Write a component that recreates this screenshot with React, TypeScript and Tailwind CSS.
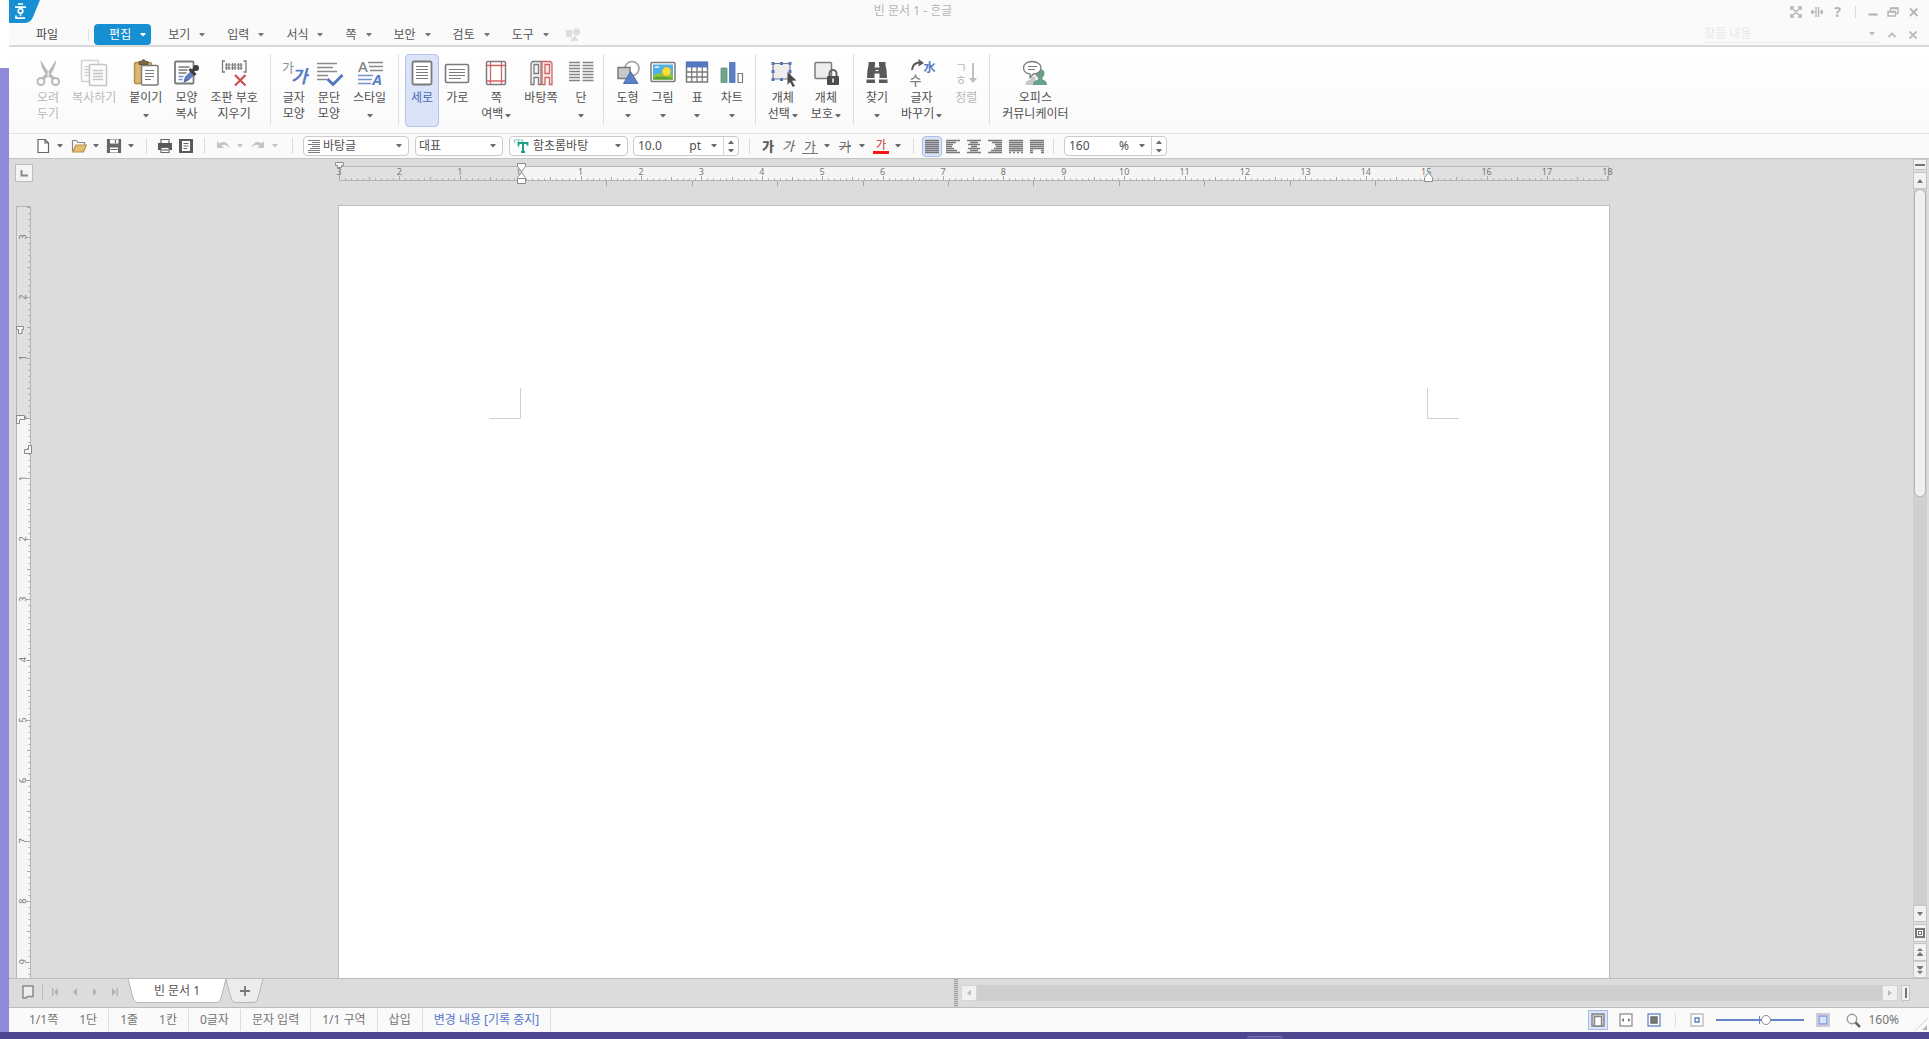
import type { ReactNode } from 'react';
import clsx from 'clsx';

const UNIT = 60.4;

const menus = ['보기', '입력', '서식', '쪽', '보안', '검토', '도구'];

function Caret({ className }: { className?: string }) {
  return (
    <svg viewBox="0 0 6 4" className={clsx('h-1 w-1.5 shrink-0', className)} fill="currentColor" aria-hidden="true">
      <path d="M.5 0h5v1L3 3.500.5 1z" />
    </svg>
  );
}

function Icon({ children }: { children: ReactNode }) {
  return (
    <svg viewBox="0 0 28 28" className="h-7 w-7 shrink-0 overflow-visible" fill="none" stroke="#7b7b7b" strokeWidth="1.5" aria-hidden="true">
      {children}
    </svg>
  );
}

// Ribbon icons

const CutIcon = () => (
  <Icon>
    <g stroke="#b9b9b9" strokeWidth="2">
      <circle cx="7" cy="22.5" r="3.5" />
      <circle cx="21.5" cy="22.5" r="3.5" />
      <path d="M19.5 19.5 14.2 15" strokeWidth="3" />
      <path d="M9 19.5 14.2 15" strokeWidth="3" />
    </g>
    <path d="M6.5 1 17 17l-3 1.5C9 12 6.500 6 6.500 1z M22 1 11.500 17l3 1.500C19.500 12 22 6 22 1z" fill="#b9b9b9" stroke="none" />
    <circle cx="14.300" cy="15.500" r="1" fill="#fff" stroke="none" />
  </Icon>
);

const CopyIcon = () => (
  <Icon>
    <g stroke="#c4c4c4">
      <rect x="1.500" y="1.500" width="17" height="21" rx="1" fill="#fcfcfc" stroke="#d2d2d2" />
      <path d="M4.500 7.500h6M4.500 10.500h6M4.500 13.500h6M4.500 16.500h6" stroke="#d2d2d2" />
      <rect x="9.500" y="5.500" width="17" height="21" rx="1" fill="#fcfcfc" />
      <path d="M13 11.500h10M13 14.500h10M13 17.500h10M13 20.500h10" />
    </g>
  </Icon>
);

const PasteIcon = () => (
  <Icon>
    <rect x="2.500" y="3.500" width="17" height="21" rx="1.500" fill="#dcb76f" stroke="#b28f4c" />
    <path d="M7 5.500v-3h2.500c.5-2.500 3.500-2.500 4 0H16v3z" fill="#7d6845" stroke="#66563c" strokeWidth="1" />
    <rect x="9.500" y="6.500" width="16.500" height="19.500" rx="1" fill="#fff" />
    <path d="M13 11.500h9M13 14.500h9M13 17.500h9M13 20.500h6" strokeWidth="1.200" />
  </Icon>
);

const PickStyleIcon = () => (
  <Icon>
    <rect x="3" y="2.500" width="18.500" height="22" rx="1" fill="#fff" strokeWidth="1.800" />
    <path d="M6.500 8h11M6.500 11h9M6.500 14h8" />
    <path d="M6.500 17.500h5M6.500 20.500h4" stroke="#7592ce" />
    <path d="m12 23 1.500-5 6-6 3 3-6 6z" fill="#5c7ec4" stroke="#4a5f96" strokeWidth="1" />
    <path d="m17.500 10 6 6M20 12.500l3.500-3.500" stroke="#3d3d3d" strokeWidth="3" />
    <circle cx="24" cy="9" r="3" fill="#3d3d3d" stroke="none" />
  </Icon>
);

const ClearMarkIcon = () => (
  <Icon>
    <path d="M5 2H2.500v11H5M23.500 2H26v11h-2.500" strokeWidth="1.300" />
    <path d="M6.500 4v7M9 4v7M12.500 4v7M15 4v7M18.500 4v7M21 4v7M5 6h5.500M5 9h5.500M11 6h5.500M11 9h5.500M17 6h5.500M17 9h5.500" strokeWidth="1.200" />
    <path d="m15 16 10.500 10.500M25.500 16 15 26.500" stroke="#cf4d4d" strokeWidth="2.200" />
  </Icon>
);

const CharShapeIcon = () => (
  <Icon>
    <text x="2" y="13" fontSize="13" fill="#909090" stroke="none">가</text>
    <text x="11" y="24" fontSize="18" fontStyle="italic" fontWeight="700" fill="#5c7ec4" stroke="none">가</text>
  </Icon>
);

const ParaShapeIcon = () => (
  <Icon>
    <path d="M2 4.500h20M2 8.500h16M2 12.500h20M2 16.500h11M2 20.500h10" strokeWidth="1.600" stroke="#8a8a8a" />
    <path d="m12.500 20 5.500 5.500L27.500 16" stroke="#5477c2" strokeWidth="3" />
  </Icon>
);

const StyleIcon = () => (
  <Icon>
    <text x="2" y="13" fontSize="15" fontWeight="500" fill="#808080" stroke="none">A</text>
    <path d="M12 3.500h15M13 7.500h14M14 11.500h13" stroke="#8a8a8a" />
    <path d="M2 16.500h15M2 20.500h14M2 24.500h13" stroke="#7592ce" />
    <text x="16.500" y="26" fontSize="15" fontStyle="italic" fontWeight="700" fill="#5c7ec4" stroke="none">A</text>
  </Icon>
);

const PortraitIcon = () => (
  <Icon>
    <rect x="4.500" y="2.500" width="19" height="23" rx="1.500" fill="#fff" strokeWidth="1.800" />
    <path d="M8 7.500h12M8 10.500h12M8 13.500h12M8 16.500h12M8 19.500h12" strokeWidth="1.200" />
  </Icon>
);

const LandscapeIcon = () => (
  <Icon>
    <rect x="2.500" y="5.500" width="23" height="18" rx="1.500" fill="#fff" strokeWidth="1.600" />
    <path d="M6 10.500h16M6 13.500h16M6 16.500h16M6 19.500h12" strokeWidth="1.200" />
  </Icon>
);

const MarginIcon = () => (
  <Icon>
    <rect x="4.500" y="2.500" width="19" height="23" rx="1.500" fill="#fff" />
    <path d="M8.500 3v22M19.500 3v22M5 6.500h18M5 22h18" stroke="#d06464" strokeWidth="1.300" />
  </Icon>
);

const MasterPageIcon = () => (
  <Icon>
    <path d="M4 25.500v-21l1.500-2H14v23h-2.500v-7H7v7zM7 5.500h4.500v9H7z" fill="#f4f4f4" strokeWidth="1.300" />
    <path d="M15 25.500v-23h8.500l1.500 2v21h-2.500v-7H18v7zM18 5.500h4.500v9H18z" fill="#fbeaea" stroke="#d06464" strokeWidth="1.300" />
  </Icon>
);

const ColumnsIcon = () => (
  <Icon>
    <path
      d="M2 3.500h11M2 6.500h11M2 9.500h11M2 12.500h11M2 15.500h11M2 18.500h11M2 21.500h11M15.500 3.500h11M15.500 6.500h11M15.500 9.500h11M15.500 12.500h11M15.500 15.500h11M15.500 18.500h11M15.500 21.500h11"
      stroke="#858585"
      strokeWidth="1.400"
    />
  </Icon>
);

const ShapesIcon = () => (
  <Icon>
    <circle cx="18" cy="9.500" r="7" stroke="#9c9c9c" fill="#fff" />
    <rect x="4" y="8.500" width="12" height="11" fill="#c9c9c9" />
    <path d="M16.500 12.500 9.500 24.500h14.500z" fill="#5c7ec4" stroke="#4a6db8" strokeWidth="1" />
  </Icon>
);

const PictureIcon = () => (
  <Icon>
    <rect x="2" y="3.500" width="24" height="19" rx="1" fill="#fff" />
    <path d="M4 5.500h20v15H4z" fill="#4db1e8" stroke="none" />
    <path d="M4 17c5-4 12-4 20-1v4.500H4z" fill="#8fc63f" stroke="none" />
    <path d="M4 18.500c7-2 13-1 20 1v1H4z" fill="#5da52e" stroke="none" />
    <path d="M5 9c2-3 5-2 6 0z" fill="#d4edfa" stroke="none" />
    <circle cx="17.500" cy="12.500" r="4.300" fill="#fbe13c" stroke="#eab92c" strokeWidth=".8" />
  </Icon>
);

const TableIcon = () => (
  <Icon>
    <rect x="3.500" y="3.500" width="21" height="19.500" fill="#fff" />
    <path d="M3 2.500h22v6H3z" fill="#5477c2" stroke="none" />
    <path d="M3.500 13h21M3.500 18h21M8.700 8v15M14 8v15M19.300 8v15" strokeWidth="1.300" />
  </Icon>
);

const ChartIcon = () => (
  <Icon>
    <path d="M3 9h6v14.500H3z" fill="#6fa58a" stroke="#5c9378" strokeWidth=".8" />
    <path d="M11.500 3.500h5.500v20h-5.500z" fill="#5c7ec4" stroke="#4a6db8" strokeWidth=".8" />
    <path d="M20 14.500h4.500v9H20z" fill="#fff" strokeWidth="1.200" />
  </Icon>
);

const SelectObjectIcon = () => (
  <Icon>
    <path d="M4 4.500h17v15.500H4z" fill="#ededed" strokeWidth="1.200" />
    <path
      d="M2.500 3h3v3h-3zM11 3h3v3h-3zM19.500 3h3v3h-3zM2.500 11h3v3h-3zM19.500 11h3v3h-3zM2.500 19h3v3h-3zM11 19h3v3h-3z"
      fill="#5477c2"
      stroke="none"
    />
    <path d="m18.500 13 9 8.500-4.500.3 3 5.200-2.300 1-2.700-5-2.500 2.700z" fill="#4a4a4a" stroke="none" />
  </Icon>
);

const LockObjectIcon = () => (
  <Icon>
    <rect x="3" y="3.500" width="16.500" height="16" rx="1" fill="#ededed" />
    <path d="M17.500 18v-3.500a3.500 3.500 0 0 1 7 0V18" strokeWidth="2" stroke="#636363" />
    <rect x="15" y="17" width="12" height="9" rx="1" fill="#4d4d4d" stroke="none" />
    <path d="M21 19.500v4" stroke="#fff" />
  </Icon>
);

const FindIcon = () => (
  <Icon>
    <path
      d="M5.500 3H12v3l-.500 2.500h5L16 6V3h6.500v3l1 5 .500 8h-7.500v-4.500h-5V19H4l.500-8 1-5z"
      fill="#595959"
      stroke="none"
    />
    <path d="M3.500 20.500h8.500v3.500H3.500zM16 20.500h8.500V24H16z" fill="#595959" stroke="none" />
    <path d="M12.500 11.500h3" stroke="#fff" strokeWidth="1.200" />
  </Icon>
);

const ReplaceIcon = () => (
  <Icon>
    <path d="M4 11c.5-5 3.500-7.500 8-7.500" stroke="#5b5b5b" strokeWidth="2" />
    <path d="M10.500 0 16 4l-5.500 3.500z" fill="#5b5b5b" stroke="none" />
    <text x="15.500" y="13" fontSize="12" fontWeight="700" fill="#5c7ec4" stroke="none">水</text>
    <text x="1.500" y="25.500" fontSize="13" fontWeight="500" fill="#808080" stroke="none">수</text>
  </Icon>
);

const SortIcon = () => (
  <Icon>
    <text x="3" y="12.500" fontSize="13" fill="#bdbdbd" stroke="none">ㄱ</text>
    <text x="3" y="25" fontSize="13" fill="#bdbdbd" stroke="none">ㅎ</text>
    <path d="M21 4v16" stroke="#bdbdbd" strokeWidth="1.800" />
    <path d="M17 19h8l-4 5z" fill="#bdbdbd" stroke="none" />
  </Icon>
);

const CommunicatorIcon = () => (
  <Icon>
    <path d="M4.500 26c0-4 3-5 5-5.500v-3h5V26z" fill="#c9c9c9" stroke="none" />
    <circle cx="19" cy="14.500" r="4.500" fill="#6b9f86" stroke="none" />
    <path d="M12 26c0-4.500 3-4.500 5-5.500v-3h4.500v3c2.500 1 4.500 1.500 4.500 5.500z" fill="#6b9f86" stroke="none" />
    <path d="M11 2.500c5 0 9 2.700 9 6.300s-3.500 6-7.500 6.200L9 18.500V15c-4-.5-6.500-3-6.500-6.200 0-3.600 3.500-6.300 8.500-6.300z" fill="#fff" strokeWidth="1.300" />
    <path d="M7 7.500h9M7 10.500h7" strokeWidth="1.100" />
  </Icon>
);

interface RibbonItem {
  icon: () => ReactNode;
  lines: string[];
  menu?: boolean;
  disabled?: boolean;
  active?: boolean;
}

const ribbon: RibbonItem[][] = [
  [
    { icon: CutIcon, lines: ['오려', '두기'], disabled: true },
    { icon: CopyIcon, lines: ['복사하기'], disabled: true },
    { icon: PasteIcon, lines: ['붙이기', ''], menu: true },
    { icon: PickStyleIcon, lines: ['모양', '복사'] },
    { icon: ClearMarkIcon, lines: ['조판 부호', '지우기'] },
  ],
  [
    { icon: CharShapeIcon, lines: ['글자', '모양'] },
    { icon: ParaShapeIcon, lines: ['문단', '모양'] },
    { icon: StyleIcon, lines: ['스타일', ''], menu: true },
  ],
  [
    { icon: PortraitIcon, lines: ['세로'], active: true },
    { icon: LandscapeIcon, lines: ['가로'] },
    { icon: MarginIcon, lines: ['쪽', '여백'], menu: true },
    { icon: MasterPageIcon, lines: ['바탕쪽'] },
    { icon: ColumnsIcon, lines: ['단', ''], menu: true },
  ],
  [
    { icon: ShapesIcon, lines: ['도형', ''], menu: true },
    { icon: PictureIcon, lines: ['그림', ''], menu: true },
    { icon: TableIcon, lines: ['표', ''], menu: true },
    { icon: ChartIcon, lines: ['차트', ''], menu: true },
  ],
  [
    { icon: SelectObjectIcon, lines: ['개체', '선택'], menu: true },
    { icon: LockObjectIcon, lines: ['개체', '보호'], menu: true },
  ],
  [
    { icon: FindIcon, lines: ['찾기', ''], menu: true },
    { icon: ReplaceIcon, lines: ['글자', '바꾸기'], menu: true },
    { icon: SortIcon, lines: ['정렬'], disabled: true },
  ],
  [{ icon: CommunicatorIcon, lines: ['오피스', '커뮤니케이터'] }],
];

function RibbonButton({ item }: { item: RibbonItem }) {
  const { icon: ItemIcon, lines, menu, disabled, active } = item;
  return (
    <button
      type="button"
      disabled={disabled}
      aria-pressed={active}
      className={clsx(
        'flex min-w-[33px] flex-col items-center whitespace-nowrap rounded-sm border px-[5px] pt-1 leading-4',
        active ? 'border-[#b3c4ec] bg-[#dae3f7] text-[#4468b0]' : 'border-transparent',
        disabled ? 'text-[#b8b8b8]' : !active && 'text-[#4f4f4f]',
      )}
    >
      <span className="-mx-1 mb-[3px]">
        <ItemIcon />
      </span>
      {lines.map((line, i) => (
        <span key={i} className="flex h-4 items-center gap-0.5">
          {line}
          {menu && i === lines.length - 1 && <Caret className="mt-1 text-[#6b6b6b]" />}
        </span>
      ))}
    </button>
  );
}

function TitleBar() {
  return (
    <div className="flex h-6 items-start">
      <div className="flex flex-1">
        <svg viewBox="0 0 31 23" className="h-[23px] w-[31px]" role="img" aria-label="한글">
          <path d="M0 0h31l-7 17q-2.500 6-9 6H0z" fill="#1690d3" />
          <g stroke="#fff" strokeWidth="1.700" fill="none">
            <path d="M9 4h5M6 7.200h11M6.500 18.200h9.500M7 15.500v3" />
            <circle cx="11.500" cy="11" r="2.300" />
            <path d="M11.500 14.500v1.500" />
          </g>
        </svg>
      </div>
      <h1 className="mr-[107px] pt-[3px] leading-4 text-[#b4b4b4]">빈 문서 1 - ᄒᆞᆫ글</h1>
      <div className="flex h-6 flex-1 items-center justify-end pr-[5px] text-[#b5b5b5]">
        <button type="button" aria-label="전체 화면" className="flex w-[21px] justify-center">
          <svg viewBox="0 0 12 12" className="h-3 w-3" fill="none" stroke="currentColor" strokeWidth="1.500">
            <path d="M1 4V1h3M8 1h3v3M11 8v3H8M4 11H1V8M2 2l8 8M10 2l-8 8" />
          </svg>
        </button>
        <button type="button" aria-label="창 맞춤" className="flex w-[21px] justify-center">
          <svg viewBox="0 0 12 12" className="h-3 w-3" fill="none" stroke="currentColor" strokeWidth="1.300">
            <path d="M5 1v10M7.500 1v10M0 6h4M12 6H8.500M2 4 0 6l2 2M10 4l2 2-2 2" />
          </svg>
        </button>
        <button type="button" aria-label="도움말" className="w-[21px] text-center text-sm font-bold leading-4">?</button>
        <span className="mx-[7px] h-3 w-px bg-[#dedede]" />
        <button type="button" aria-label="최소화" className="flex w-[19px] justify-center">
          <svg viewBox="0 0 12 12" className="h-3 w-3" stroke="currentColor" strokeWidth="2.200">
            <path d="M1.500 8.500h9" />
          </svg>
        </button>
        <button type="button" aria-label="이전 크기로" className="flex w-[21px] justify-center">
          <svg viewBox="0 0 12 12" className="h-3 w-3" fill="none" stroke="currentColor" strokeWidth="1.400">
            <path d="M3.500 5V2H11v5.500H8.500M1 5.500h7.500V10H1z" />
            <path d="M1 6h7.500M3.500 2.500H11" />
          </svg>
        </button>
        <button type="button" aria-label="닫기" className="flex w-[21px] justify-center">
          <svg viewBox="0 0 12 12" className="h-3 w-3" stroke="currentColor" strokeWidth="1.800">
            <path d="m2 2.500 7.500 7.500M9.500 2.500 2 10" />
          </svg>
        </button>
      </div>
    </div>
  );
}

function MenuBar() {
  return (
    <nav className="flex h-[23px] items-center border-b-2 border-[#dadada] bg-[#fafafa]">
      <button type="button" className="ml-[27px] text-[#444]">파일</button>
      <span className="ml-[30px] mr-[5px] h-3 w-px bg-[#e0e0e0]" />
      <div className="flex gap-0.5">
        <button type="button" className="flex h-[21px] items-center gap-[9px] rounded-sm bg-[#1690d3] pl-[15px] pr-[5px] text-white">
          편집
          <Caret />
        </button>
        {menus.map((menu) => (
          <button type="button" key={menu} className="flex h-[21px] items-center gap-[9px] pl-[15px] pr-[5px] text-[#555]">
            {menu}
            <Caret className="text-[#777]" />
          </button>
        ))}
      </div>
      <svg viewBox="0 0 14 14" className="ml-3 h-3.5 w-3.5" fill="#dedede" aria-hidden="true">
        <path d="M0 2h6v7H0zM8.500 7.500 13 13H4z" />
        <circle cx="10.500" cy="4" r="3.500" />
      </svg>
      <div className="ml-auto flex items-center pr-[9px] text-[#bcbcbc]">
        <label className="flex h-4 w-[174px] items-center border-b border-[#ebebeb] pr-[3px]">
          <input type="text" aria-label="찾을 내용" placeholder="찾을 내용" className="min-w-0 flex-1 bg-transparent outline-none placeholder:text-[#e6e8ea]" />
          <Caret />
        </label>
        <button type="button" aria-label="리본 접기" className="ml-2 flex w-3 justify-center">
          <svg viewBox="0 0 10 10" className="h-2.5 w-2.5" fill="none" stroke="currentColor" strokeWidth="1.800">
            <path d="m1.500 7 3.500-3.500L8.500 7" />
          </svg>
        </button>
        <button type="button" aria-label="문서 닫기" className="ml-2 flex w-3.5 justify-center">
          <svg viewBox="0 0 10 10" className="h-2.5 w-2.5" stroke="currentColor" strokeWidth="1.800">
            <path d="m1.500 1.500 7 7M8.500 1.500l-7 7" />
          </svg>
        </button>
      </div>
    </nav>
  );
}

function Ribbon() {
  return (
    <div className="flex h-[87px] border-b border-[#e2e2e2] bg-linear-to-b from-white to-[#fafafa] pl-[22px] pb-1.5 pt-[7px]">
      {ribbon.map((group, i) => (
        <div key={i} className="flex">
          {i > 0 && <span className="mx-1.5 h-[71px] w-px bg-[#dedede]" />}
          <div className="flex gap-px">
            {group.map((item) => (
              <RibbonButton key={item.lines.join('')} item={item} />
            ))}
          </div>
        </div>
      ))}
    </div>
  );
}

function Small({ children }: { children: ReactNode }) {
  return (
    <svg viewBox="0 0 16 16" className="h-4 w-4 shrink-0" fill="none" stroke="#666" strokeWidth="1.200" aria-hidden="true">
      {children}
    </svg>
  );
}

function ToolButton({ label, children, menu, dim }: { label: string; children: ReactNode; menu?: boolean; dim?: boolean }) {
  return (
    <button type="button" aria-label={label} disabled={dim} className={clsx('flex h-5 items-center', dim ? 'text-[#c4c4c4]' : 'text-[#6b6b6b]')}>
      {children}
      {menu && <Caret className="ml-1.5 mr-1" />}
    </button>
  );
}

function Divider({ className }: { className?: string }) {
  return <span className={clsx('h-4 w-px shrink-0 bg-[#dcdcdc]', className)} />;
}

function Combo({ label, value, icon, className }: { label: string; value: string; icon?: ReactNode; className: string }) {
  return (
    <div className={clsx('relative flex h-5 shrink-0 items-center rounded-sm border border-[#cbcbcb] bg-white pl-[3px]', className)}>
      {icon}
      <select aria-label={label} defaultValue={value} className="h-full min-w-0 flex-1 appearance-none bg-transparent leading-4 text-[#4f4f4f] outline-none">
        <option>{value}</option>
      </select>
      <Caret className="pointer-events-none absolute right-1.5 text-[#6b6b6b]" />
    </div>
  );
}

function NumberField({ label, value, unit, className }: { label: string; value: string; unit: string; className: string }) {
  return (
    <div className={clsx('flex h-5 shrink-0 items-center rounded-sm border border-[#cbcbcb] bg-white text-[#4f4f4f]', className)}>
      <input type="text" aria-label={label} defaultValue={value} className="min-w-0 flex-1 bg-transparent pl-1 leading-4 outline-none" />
      <span className="pr-2.5">{unit}</span>
      <button type="button" aria-label={`${label} 목록`} className="flex h-full w-3 items-center text-[#6b6b6b]">
        <Caret />
      </button>
      <div className="flex h-full w-[15px] flex-col border-l border-[#d4d4d4] text-[#6b6b6b]">
        <button type="button" aria-label={`${label} 늘리기`} className="flex flex-1 items-center justify-center">
          <Caret className="rotate-180" />
        </button>
        <button type="button" aria-label={`${label} 줄이기`} className="flex flex-1 items-center justify-center">
          <Caret />
        </button>
      </div>
    </div>
  );
}

const aligns = [
  { label: '양쪽 정렬', d: 'M1 2.500h14M1 4.500h14M1 6.500h14M1 8.500h14M1 10.500h14M1 12.500h14M1 14.500h14', active: true },
  { label: '왼쪽 정렬', d: 'M1 2.500h14M1 4.500h10M1 6.500h7M1 8.500h6M1 10.500h8M1 12.500h11M1 14.500h14' },
  { label: '가운데 정렬', d: 'M1 2.500h14M4 4.500h8M2 6.500h12M5 8.500h6M2 10.500h12M4 12.500h8M1 14.500h14' },
  { label: '오른쪽 정렬', d: 'M1 2.500h14M5 4.500h10M8 6.500h7M9 8.500h6M7 10.500h8M4 12.500h11M1 14.500h14' },
  { label: '배분 정렬', d: 'M1 2.500h14M1 4.500h14M1 6.500h14M1 8.500h14M1 10.500h14M1 12.500h14M1 14.500h2M5 14.500h2M9 14.500h2M13 14.500h2' },
  { label: '나눔 정렬', d: 'M1 2.500h14M1 4.500h14M1 6.500h14M1 8.500h14M1 10.500h14M1 12.500h3M12 12.500h3M1 14.500h3M12 14.500h3' },
];

function ToolBar() {
  return (
    <div className="flex h-[25px] items-center overflow-hidden border-b border-[#c4c4c4] bg-[#fafafa] pl-[26px]">
      <ToolButton label="새 문서" menu>
        <Small>
          <path d="M3 1.500h7l3.500 3.500v9.500H3zM10 1.500V5h3.500" fill="#fff" />
        </Small>
      </ToolButton>
      <span className="w-1" />
      <ToolButton label="불러오기" menu>
        <Small>
          <path d="M1.500 13V2.500h4l1.500 2h6.500V8" stroke="#8a8a8a" />
          <path d="m1.500 14 3.500-7h10.500l-3 7z" fill="#e2bd72" stroke="#b99248" />
        </Small>
      </ToolButton>
      <span className="w-[3px]" />
      <ToolButton label="저장하기" menu>
        <Small>
          <path d="M1.500 1.500h13v13h-13z" fill="#666" />
          <path d="M4 1.500h8.500v4H4zM4 9.500h8v5H4z" fill="#fff" stroke="none" />
          <path d="M9.500 2v3M4.500 11.500h7" />
        </Small>
      </ToolButton>
      <Divider className="ml-2 mr-2.5" />
      <ToolButton label="인쇄">
        <Small>
          <path d="M4 1.500h8v4H4z" fill="#fff" />
          <path d="M1 5h14v7H1z" fill="#5a5a5a" stroke="none" />
          <path d="M4 9.500h8v5H4z" fill="#fff" />
          <path d="M5 12h6" />
        </Small>
      </ToolButton>
      <span className="w-[5px]" />
      <ToolButton label="미리 보기">
        <Small>
          <path d="M1 1h14v14H1z" fill="#5a5a5a" stroke="none" />
          <path d="M4 3h8v10H4z" fill="#fff" stroke="none" />
          <path d="M5.500 5.500h5M5.500 8h5M5.500 10.500h3.500" />
        </Small>
      </ToolButton>
      <Divider className="mx-2.5" />
      <ToolButton label="되돌리기" menu dim>
        <Small>
          <path d="M2 3v7h7L6.500 7.800C9 6 12 6 14.500 10.500 13.500 4.500 8.500 2.500 4.500 5.500z" fill="#c4c4c4" stroke="none" />
        </Small>
      </ToolButton>
      <span className="w-[3px]" />
      <ToolButton label="다시 실행" menu dim>
        <Small>
          <path d="M14 3v7H7l2.500-2.200C7 6 4 6 1.500 10.500 2.500 4.500 7.500 2.500 11.500 5.500z" fill="#c4c4c4" stroke="none" />
        </Small>
      </ToolButton>
      <Divider className="mx-2.5" />
      <Combo
        label="스타일"
        value="바탕글"
        className="w-[106px]"
        icon={
          <Small>
            <path d="M1 2.500h12M5 4.500h8M1 6.500h12M5 8.500h8M3 10.500h10M1 12.500h12M1 14.500h12" stroke="#7b7b7b" />
          </Small>
        }
      />
      <span className="w-1.5" />
      <Combo label="언어" value="대표" className="w-[88px]" />
      <span className="w-1.5" />
      <Combo
        label="글꼴"
        value="함초롬바탕"
        className="w-[119px]"
        icon={
          <span className="mr-1 flex">
            <Small>
              <path d="M1.500 5V2h8v3M5.500 2v7.500" stroke="#8fc9bf" />
              <path d="M5.500 7.500V5h9v2.500M10 5v9M8 14h4" stroke="#1f9d8b" strokeWidth="2" />
            </Small>
          </span>
        }
      />
      <span className="w-[5px]" />
      <NumberField label="글자 크기" value="10.0" unit="pt" className="w-[106px]" />
      <Divider className="mx-2.5" />
      <button type="button" aria-label="진하게" className="w-4 text-[13px] font-black leading-4 text-[#606060]">가</button>
      <button type="button" aria-label="기울임" className="ml-1 w-4 text-[13px] italic leading-4 text-[#606060]">가</button>
      <span className="w-1.5" />
      <ToolButton label="밑줄" menu>
        <span className="w-4 border-b border-[#7b7b7b] text-center text-[13px] leading-[14px]">가</span>
      </ToolButton>
      <span className="w-[3px]" />
      <ToolButton label="취소선" menu>
        <span className="w-4 text-center text-[13px] leading-4 line-through">가</span>
      </ToolButton>
      <span className="w-1" />
      <ToolButton label="글자 색" menu>
        <span className="w-4 border-b-[3px] border-[#fb1414] text-center text-[11px] font-medium leading-3 text-[#d05050]">가</span>
      </ToolButton>
      <Divider className="mx-2" />
      {aligns.map((align) => (
        <button
          type="button"
          key={align.label}
          aria-label={align.label}
          aria-pressed={align.active ?? false}
          className={clsx('flex h-[21px] items-center rounded-sm border px-px', align.active ? 'border-[#a9bce8] bg-[#dae3f7]' : 'ml-px border-transparent')}
        >
          <Small>
            <path d={align.d} stroke="#7a7a7a" strokeWidth="1.400" />
          </Small>
        </button>
      ))}
      <Divider className="ml-1.5 mr-2.5" />
      <NumberField label="줄 간격" value="160" unit="%" className="w-[103px]" />
    </div>
  );
}

function tickPath(from: number, to: number, horizontal: boolean) {
  let d = '';
  for (let i = Math.ceil(from * 10); i <= Math.floor(to * 10); i++) {
    const pos = Math.round((i - from * 10) * (UNIT / 10)) + 0.5;
    const len = i % 10 === 0 ? 4 : i % 5 === 0 ? 3 : 1.5;
    d += horizontal ? `M${pos} ${14 - len}V14` : `M${14 - len} ${pos}H14`;
  }
  return d;
}

function HorizontalRuler() {
  const numbers = Array.from({ length: 22 }, (_, i) => i - 3);
  const tabStops = Array.from({ length: 10 }, (_, i) => 182 + Math.round((i + 1) * 85.4));
  return (
    <svg viewBox="0 0 1270 24" className="mt-[7px] h-6 w-[1270px] shrink-0 overflow-visible" fill="none" aria-hidden="true">
      <path d="M.5.500h1269v14H.5z" fill="#e0e0e0" stroke="#b5b5b5" />
      <path d="M182 1h907v13H182z" fill="#f5f5f5" />
      <path d={tickPath(-3, 18, true)} stroke="#a8a8a8" />
      {tabStops.map((x) => (
        <path key={x} d={`M${x + 0.5} 15v5`} stroke="#a5a5a5" />
      ))}
      {numbers.map((n) => (
        <text key={n} x={(n + 3) * UNIT} y="9" textAnchor="middle" fontSize="9" fill="#777">
          {Math.abs(n)}
        </text>
      ))}
      <path d="M-3.500-3.500h8v3h-2v2h-4v-2h-2z" fill="#f2f2f2" stroke="#909090" />
      <path d="M178.500-2.500h8v3l-4 5-4-5zM178.500 11.500l4-5 4 5v1h-8z" fill="#fff" stroke="#8a8a8a" />
      <path d="M178.500 12.500h8v5h-8z" fill="#fff" stroke="#8a8a8a" />
      <path d="m1085.500 11.500 4-5 4 5v4h-8z" fill="#fff" stroke="#8a8a8a" />
    </svg>
  );
}

function VerticalRuler() {
  const from = -3.51;
  const numbers = Array.from({ length: 13 }, (_, i) => i - 3);
  return (
    <div className="ml-[7px] h-full w-4 shrink-0 overflow-hidden">
      <svg className="h-full w-4" fill="none" aria-hidden="true">
        <path d="M.5 900V.5h14V900" fill="#e0e0e0" stroke="#b5b5b5" />
        <path d="M1 212h13v700H1z" fill="#f5f5f5" />
        <path d={tickPath(from, 12, false)} stroke="#a8a8a8" />
        {numbers.map((n) => (
          <text
            key={n}
            textAnchor="middle"
            fontSize="9"
            fill="#777"
            transform={`translate(10 ${(n - from) * UNIT}) rotate(-90)`}
          >
            {Math.abs(n)}
          </text>
        ))}
        <path d="M.5 120.500h7v3H6v4H2.500v-4H.5z" fill="#f5f5f5" stroke="#8a8a8a" />
        <path d="M.5 209.500h8v4h-5v4h-3z" fill="#f5f5f5" stroke="#8a8a8a" />
        <path d="M15.500 239.500h-3v4h-4v4h7z" fill="#f5f5f5" stroke="#8a8a8a" />
      </svg>
    </div>
  );
}

function ScrollButton({ label, d, className }: { label: string; d: string; className: string }) {
  return (
    <button type="button" aria-label={label} className={clsx('flex items-center justify-center border border-[#c6c6c6] bg-[#f1f1f1]', className)}>
      <svg viewBox="0 0 10 10" className="h-2.5 w-2.5 shrink-0" fill="#777" aria-hidden="true">
        <path d={d} fillRule="evenodd" />
      </svg>
    </button>
  );
}

function VerticalScrollbar() {
  return (
    <div className="flex w-4 shrink-0 flex-col pr-0.5">
      <ScrollButton label="화면 나누기" d="M0 4h10v2H0z" className="h-[11px]" />
      <ScrollButton label="위로" d="M5 3 8 7H2z" className="mt-0.5 h-[17px]" />
      <div className="flex-1 bg-[#cfcfcf] px-px">
        <div className="h-[43%] rounded-full border border-[#b5b5b5] bg-[#f0f0f0]" />
      </div>
      <ScrollButton label="아래로" d="M5 7 8 3H2z" className="h-[17px]" />
      <ScrollButton label="찾아가기" d="M0 0h10v10H0zM2 2v6h6V2zM3 3h4v4H3zM4 4v2h2V4z" className="mt-0.5 h-[18px]" />
      <ScrollButton label="이전 쪽" d="M5 1l3 3H2zM5 5l3 3H2zM2 8h6v1H2z" className="mt-px h-[18px]" />
      <ScrollButton label="다음 쪽" d="M5 9l3-3H2zM5 5l3-3H2zM2 1h6v1H2z" className="h-[17px]" />
    </div>
  );
}

function Page() {
  return (
    <div className="flex min-h-0 flex-1 flex-col items-center overflow-hidden pt-0.5">
      <article aria-label="문서 본문" contentEditable suppressContentEditableWarning className="flex w-[1272px] flex-1 items-start justify-between border-x border-t border-[#bebebe] bg-white px-[150px] pt-[182px] outline-none">
        <span className="h-[31px] w-8 border-b border-r border-[#cfcfcf]" />
        <span className="h-[31px] w-8 border-b border-l border-[#cfcfcf]" />
      </article>
    </div>
  );
}

function Workspace() {
  return (
    <main className="flex min-h-0 flex-1 border-b border-[#bdbdbd] bg-[#dcdcdc]">
      <div className="flex w-[22px] shrink-0 flex-col">
        <button type="button" aria-label="탭 종류" className="ml-1.5 mt-[5px] flex h-[18px] w-[18px] shrink-0 items-center justify-center border border-[#bdbdbd] bg-[#f4f4f4]">
          <svg viewBox="0 0 8 8" className="h-2 w-2" fill="none" stroke="#8a8a8a" strokeWidth="2">
            <path d="M1.500 1v5.500H8" />
          </svg>
        </button>
        <div className="mt-6 min-h-0 flex-1">
          <VerticalRuler />
        </div>
      </div>
      <div className="flex min-w-0 flex-1 flex-col pl-2 pr-[5px]">
        <div className="flex h-11 shrink-0 justify-center">
          <HorizontalRuler />
        </div>
        <Page />
      </div>
      <VerticalScrollbar />
    </main>
  );
}

function TabBar() {
  const nav = [
    { label: '처음 탭', d: 'M2 1h1.500v8H2zM8 1v8L4 5z' },
    { label: '이전 탭', d: 'M7 1v8L3 5z' },
    { label: '다음 탭', d: 'M3 1v8l4-4z' },
    { label: '마지막 탭', d: 'M2 1v8l4-4zM6.500 1H8v8H6.500z' },
  ];
  return (
    <div className="flex h-[29px] shrink-0 border-b border-[#bdbdbd] bg-[#dcdcdc]">
      <div className="flex w-[49.2%]">
        <div className="flex h-[26px] items-center pl-[13px]">
          <button type="button" aria-label="문서 탭 목록">
            <svg viewBox="0 0 12 14" className="h-3.5 w-3" fill="#eee" stroke="#8a8a8a" strokeWidth="1.500">
              <path d="M1 1h10v10.500H5.500L4 13H1z" />
            </svg>
          </button>
          <span className="ml-2 mr-0.5 h-4 w-px bg-[#bdbdbd]" />
          {nav.map((item) => (
            <button type="button" key={item.label} aria-label={item.label} className="flex w-5 justify-center">
              <svg viewBox="0 0 10 10" className="h-2.5 w-2.5" fill="#b3b3b3">
                <path d={item.d} />
              </svg>
            </button>
          ))}
        </div>
        <div className="relative ml-0.5 h-6 w-[138px]">
          <svg viewBox="0 0 138 24" className="absolute inset-0 h-6 w-[138px]" stroke="#b5b5b5" aria-hidden="true">
            <path d="m99 0 5 19q1 4.500 5 4.500h17q4 0 5-4.500l5-19" fill="#ececec" />
            <path d="m1 0 5 19q1 4.500 5 4.500h78q4 0 5-4.500l5-19" fill="#fff" />
          </svg>
          <div className="relative flex h-6 items-center text-[#555]">
            <button type="button" className="w-[100px]">빈 문서 1</button>
            <button type="button" aria-label="새 탭" className="flex w-9 justify-center">
              <svg viewBox="0 0 10 10" className="h-2.5 w-2.5" stroke="#777" strokeWidth="1.800">
                <path d="M5 0v10M0 5h10" />
              </svg>
            </button>
          </div>
        </div>
      </div>
      <div className="flex flex-1 items-center pr-[19px]">
        <span className="h-full w-1 bg-[repeating-linear-gradient(#a0a0a0_0_1px,#d0d0d0_1px_2px)]" />
        <button type="button" aria-label="왼쪽으로" className="ml-[3px] flex h-4 w-4 items-center justify-center border border-[#d4d4d4] bg-[#f1f1f1]">
          <svg viewBox="0 0 10 10" className="h-2.5 w-2.5" fill="#bdbdbd">
            <path d="M7 2v6L3 5z" />
          </svg>
        </button>
        <div className="h-4 flex-1 bg-[#cfcfcf]" />
        <button type="button" aria-label="오른쪽으로" className="flex h-4 w-4 items-center justify-center border border-[#d4d4d4] bg-[#f1f1f1]">
          <svg viewBox="0 0 10 10" className="h-2.5 w-2.5" fill="#bdbdbd">
            <path d="M3 2v6l4-3z" />
          </svg>
        </button>
        <button type="button" aria-label="세로로 나누기" className="ml-[3px] flex h-4 w-[9px] items-center justify-center border border-[#c6c6c6] bg-[#f1f1f1]">
          <span className="h-2.5 w-0.5 bg-[#777]" />
        </button>
      </div>
    </div>
  );
}

const statusGroups = [['1/1쪽', '1단'], ['1줄', '1칸'], ['0글자'], ['문자 입력'], ['1/1 구역'], ['삽입']];

function ViewIcon({ children, stroke }: { children: ReactNode; stroke: string }) {
  return (
    <svg viewBox="0 0 14 14" className="h-3.5 w-3.5" fill="none" stroke={stroke} strokeWidth="1.400" aria-hidden="true">
      {children}
    </svg>
  );
}

function StatusBar() {
  return (
    <footer className="flex h-6 shrink-0 items-center bg-[#fafafa] text-[#747474]">
      <div className="flex h-full items-center pl-[9px]">
        {statusGroups.map((group) => (
          <div key={group[0]} className="flex h-[22px] items-center gap-[21px] border-r border-[#dedede] px-[11px]">
            {group.map((text) => (
              <span key={text}>{text}</span>
            ))}
          </div>
        ))}
        <button type="button" className="h-[22px] border-r border-[#dedede] px-[11px] text-[#5577cc]">
          변경 내용 [기록 중지]
        </button>
      </div>
      <div className="ml-auto flex h-full items-center">
        <button type="button" aria-label="쪽 윤곽" aria-pressed="true" className="flex h-5 w-5 items-center justify-center border border-[#a9bce8] bg-[#dae3f7]">
          <ViewIcon stroke="#858585">
            <path d="M1 1h12v12H1z" fill="#d4d4d4" />
            <path d="M3.500 3.500h7V13h-7z" fill="#fff" />
          </ViewIcon>
        </button>
        <button type="button" aria-label="폭 맞춤" className="ml-[11px]">
          <ViewIcon stroke="#9a9a9a">
            <path d="M1 1h12v12H1z" fill="#fff" />
            <path d="m5 5-2.500 2L5 9zM9 5l2.500 2L9 9z" fill="#777" stroke="none" />
          </ViewIcon>
        </button>
        <button type="button" aria-label="쪽 맞춤" className="ml-3.5">
          <ViewIcon stroke="#7592ce">
            <path d="M1 1h12v12H1z" fill="#fff" />
            <path d="M4 4h6v6H4z" fill="#777" stroke="#6a6a6a" />
          </ViewIcon>
        </button>
        <span className="mx-3.5 h-3.5 w-px bg-[#dedede]" />
        <button type="button" aria-label="축소">
          <ViewIcon stroke="#bdbdbd">
            <path d="M1 1h12v12H1z" fill="#fff" />
            <path d="M5 5h4v4H5z" stroke="#5c7ec4" />
          </ViewIcon>
        </button>
        <div className="relative ml-3 flex h-5 w-[88px] items-center">
          <span className="h-0.5 w-full bg-[#6483cb]" />
          <span className="absolute left-[43px] h-2 w-px bg-[#6483cb]" />
          <input
            type="range"
            aria-label="확대 비율"
            min="10"
            max="274"
            defaultValue="160"
            className="absolute inset-0 w-full appearance-none bg-transparent [&::-webkit-slider-thumb]:h-2.5 [&::-webkit-slider-thumb]:w-2.5 [&::-webkit-slider-thumb]:appearance-none [&::-webkit-slider-thumb]:rounded-full [&::-webkit-slider-thumb]:border [&::-webkit-slider-thumb]:border-[#8a8a8a] [&::-webkit-slider-thumb]:bg-white"
          />
        </div>
        <button type="button" aria-label="확대" className="ml-3">
          <ViewIcon stroke="#bdbdbd">
            <path d="M1 1h12v12H1z" fill="#fff" />
            <path d="M3 3h8v8H3z" stroke="#7b9be0" fill="#dae3f7" />
          </ViewIcon>
        </button>
        <button type="button" className="ml-4 flex items-center gap-[7px]">
          <svg viewBox="0 0 15 15" className="h-[15px] w-[15px]" fill="none" aria-hidden="true">
            <circle cx="6" cy="6" r="4.700" stroke="#9a9a9a" strokeWidth="1.400" />
            <path d="m9.500 9.500 4.500 4.500" stroke="#666" strokeWidth="2.500" />
          </svg>
          160%
        </button>
        <svg viewBox="0 0 14 14" className="ml-4 h-3.5 w-3.5 self-end" fill="none" aria-hidden="true">
          <path d="M0 13 13 0" stroke="#d4d4d4" />
          <path d="M12 7v5H7z" fill="#b5b5b5" />
        </svg>
      </div>
    </footer>
  );
}

export default function App() {
  return (
    <div className="flex h-screen flex-col overflow-hidden bg-[#504690] font-['Noto_Sans','Noto_Sans_CJK_KR',sans-serif] text-xs">
      <div className="flex min-h-0 flex-1">
        <div className="w-[9px] shrink-0 bg-[#8f8ad8]">
          <div className="h-[68px] bg-white" />
        </div>
        <div className="flex min-w-0 flex-1 flex-col">
          <header className="shrink-0 bg-[#fafafa]">
            <TitleBar />
            <MenuBar />
            <Ribbon />
            <ToolBar />
          </header>
          <Workspace />
          <TabBar />
          <StatusBar />
        </div>
      </div>
      <div className="flex h-[7px] shrink-0 items-end justify-center">
        <span className="ml-[600px] h-[3px] w-9 rounded-t-sm border-t border-[#7a70b4] bg-[#5f559c]" />
      </div>
    </div>
  );
}
